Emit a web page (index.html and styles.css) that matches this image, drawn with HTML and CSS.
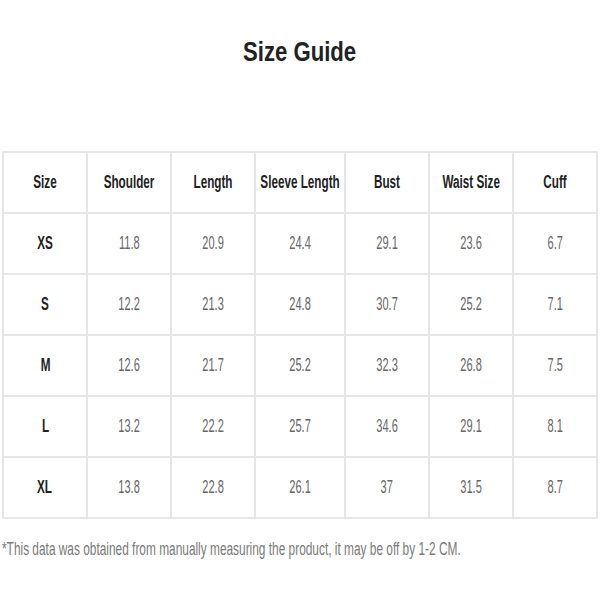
FILE: index.html
```html
<!DOCTYPE html>
<html>
<head>
<meta charset="utf-8">
<link rel="stylesheet" href="styles.css">
</head>
<body>
<div class="page">
  <h1 class="title"><span>Size Guide</span></h1>
  <div class="grid">
    <div class="cell head"><span>Size</span></div>
    <div class="cell head"><span>Shoulder</span></div>
    <div class="cell head"><span>Length</span></div>
    <div class="cell head"><span>Sleeve Length</span></div>
    <div class="cell head"><span>Bust</span></div>
    <div class="cell head"><span>Waist Size</span></div>
    <div class="cell head"><span>Cuff</span></div>

    <div class="cell head"><span>XS</span></div>
    <div class="cell"><span>11.8</span></div>
    <div class="cell"><span>20.9</span></div>
    <div class="cell"><span>24.4</span></div>
    <div class="cell"><span>29.1</span></div>
    <div class="cell"><span>23.6</span></div>
    <div class="cell"><span>6.7</span></div>

    <div class="cell head"><span>S</span></div>
    <div class="cell"><span>12.2</span></div>
    <div class="cell"><span>21.3</span></div>
    <div class="cell"><span>24.8</span></div>
    <div class="cell"><span>30.7</span></div>
    <div class="cell"><span>25.2</span></div>
    <div class="cell"><span>7.1</span></div>

    <div class="cell head"><span>M</span></div>
    <div class="cell"><span>12.6</span></div>
    <div class="cell"><span>21.7</span></div>
    <div class="cell"><span>25.2</span></div>
    <div class="cell"><span>32.3</span></div>
    <div class="cell"><span>26.8</span></div>
    <div class="cell"><span>7.5</span></div>

    <div class="cell head"><span>L</span></div>
    <div class="cell"><span>13.2</span></div>
    <div class="cell"><span>22.2</span></div>
    <div class="cell"><span>25.7</span></div>
    <div class="cell"><span>34.6</span></div>
    <div class="cell"><span>29.1</span></div>
    <div class="cell"><span>8.1</span></div>

    <div class="cell head"><span>XL</span></div>
    <div class="cell"><span>13.8</span></div>
    <div class="cell"><span>22.8</span></div>
    <div class="cell"><span>26.1</span></div>
    <div class="cell"><span>37</span></div>
    <div class="cell"><span>31.5</span></div>
    <div class="cell"><span>8.7</span></div>
  </div>
  <p class="note"><span>*This data was obtained from manually measuring the product, it may be off by 1-2 CM.</span></p>
</div>
</body>
</html>
```
FILE: styles.css
```css
html, body {
  margin: 0;
  padding: 0;
  background: #fff;
}
body {
  font-family: "Liberation Sans", Arial, sans-serif;
  width: 600px;
  height: 600px;
  overflow: hidden;
}
.page {
  padding-top: 30px;
  width: 600px;
  overflow: hidden;
}
.title {
  margin: 0;
  height: 44px;
  display: flex;
  justify-content: center;
  align-items: center;
  font-size: 28px;
  font-weight: bold;
  color: #222;
}
.title span {
  display: inline-block;
  transform: scaleX(0.79);
  white-space: nowrap;
}
.grid {
  margin: 77px 0 0 2px;
  width: 596px;
  display: grid;
  grid-template-columns: 82px 82px 82px 88px 82px 82px 82px;
  grid-auto-rows: 59px;
  gap: 2px;
  padding: 2px;
  box-sizing: border-box;
  background: #e6e6e6;
}
.cell {
  background: #fff;
  display: flex;
  justify-content: center;
  align-items: center;
  font-size: 17.5px;
  color: #666;
  white-space: nowrap;
  min-width: 0;
  overflow: hidden;
}
.cell span {
  display: inline-block;
  transform: scaleX(0.63);
  flex-shrink: 0;
}
.cell.head {
  font-size: 18px;
  font-weight: bold;
  color: #222;
}
.cell.head span {
  transform: scaleX(0.65);
}
.note {
  margin: 20px 0 0 0;
  padding-left: 2px;
  width: 598px;
  overflow: hidden;
  font-size: 18px;
  color: #7a7a7a;
  white-space: nowrap;
}
.note span {
  display: inline-block;
  transform: scaleX(0.66);
  transform-origin: left center;
}
```
